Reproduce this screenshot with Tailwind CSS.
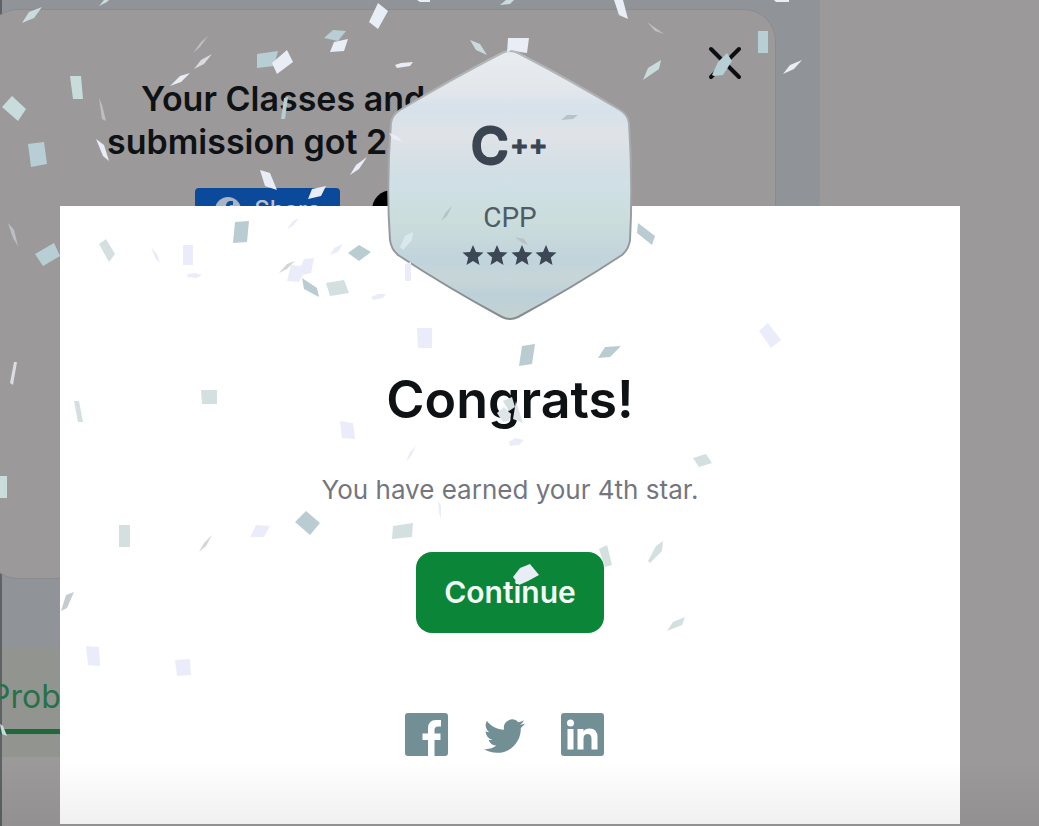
<!DOCTYPE html>
<html lang="en">
<head>
<meta charset="utf-8">
<meta name="viewport" content="width=device-width, initial-scale=1">
<title>Congrats!</title>
<script src="https://cdn.jsdelivr.net/npm/@tailwindcss/browser@4"></script>
</head>
<body class="relative min-h-screen overflow-hidden bg-[#9c999b] font-['Inter',sans-serif] text-[#0f1214]">

<!-- Dimmed page behind the dialog -->
<main class="min-h-screen border-l-2 border-[#5e6265]">
  <div class="mr-[219px] bg-[#909398] pt-[9px] pb-[68px]">
    <section class="-ml-4 mr-[44px] flex h-[570px] flex-col rounded-[32px] border border-[#8a8b8f] bg-[#9c999b] pt-[67px]">
      <div class="flex flex-col">
        <h2 class="text-[34px] leading-[43px] font-semibold whitespace-nowrap">
          <span class="block pl-[154px]">Your Classes and</span>
          <span class="block pl-[120px]">submission got 2</span>
        </h2>
        <div class="flex items-center gap-8 pt-[25px] pl-[208px]">
          <button class="flex h-11 w-[145px] items-center justify-center gap-3 rounded bg-[#0b4a9b] text-2xl font-medium text-[#b9c3d0]">
            <svg class="size-7" viewBox="0 0 28 28" aria-hidden="true"><circle cx="14" cy="14" r="13" fill="#a9b4c4"/><path d="M12 27V17H9v-4h3v-3c0-3 2-5 5-5h2v4h-2c-1 0-1.500.5-1.500 1.500V13H19l-.6 4h-2.900v10z" fill="#0b4a9b"/></svg>
            Share
          </button>
          <button class="size-10 rounded-full bg-black" aria-label="Share on X"></button>
        </div>
      </div>
    </section>
  </div>
  <nav class="mr-[219px] h-[110px] bg-[#929490] pt-[26px]">
    <a href="#problems" class="-ml-3 block w-48 border-b-[5px] border-[#21693d] pb-2 text-[32px] leading-[48px] text-[#28704a]">Problems</a>
  </nav>
</main>
<button class="absolute top-[45px] left-[707px] size-9" aria-label="Close">
  <svg class="size-9" viewBox="0 0 36 36" fill="none" stroke="#0c0e10" stroke-width="4" stroke-linecap="round"><path d="M4 4 32 32M32 4 4 32"/></svg>
</button>

<!-- Dialog -->
<div class="absolute inset-0 flex pt-[206px] pr-[79px] pb-[2px] pl-[60px]">
  <div role="dialog" aria-labelledby="title" class="flex flex-1 flex-col items-center bg-white">
    <svg class="-mt-[158px] h-[274px] w-[248px] shrink-0" viewBox="386 48 248 274" role="img" aria-label="C++ badge, four stars">
      <defs>
        <linearGradient id="silver" x1="0" y1="0" x2="0" y2="1">
          <stop offset="0" stop-color="#e8edf0"/><stop offset=".14" stop-color="#e3e7ec"/><stop offset=".22" stop-color="#d6e1eb"/>
          <stop offset=".32" stop-color="#dfe3e7"/><stop offset=".44" stop-color="#d2dfe5"/><stop offset=".52" stop-color="#cfe0e5"/><stop offset=".64" stop-color="#cbdcdb"/>
          <stop offset=".78" stop-color="#c1d4dc"/><stop offset=".85" stop-color="#c7d6d8"/><stop offset=".91" stop-color="#bdd0da"/><stop offset="1" stop-color="#c4d3d0"/>
        </linearGradient>
        <linearGradient id="rim" x1="0" y1="0" x2="0" y2="1">
          <stop offset="0" stop-color="#b4b8bb"/><stop offset=".4" stop-color="#a5a8aa"/><stop offset="1" stop-color="#858b8e"/>
        </linearGradient>
      </defs>
      <path d="M502 53Q510 49 518 53Q572 81 620 110Q628 115 629 123Q633 184 630 240Q629 249 622 255Q572 288 518 317Q510 321 502 317Q448 288 398 255Q391 249 390 240Q386 184 391 123Q392 115 400 110Q448 81 502 53Z" fill="url(#silver)" stroke="url(#rim)" stroke-width="2"/>
      <g fill="#3b4552" stroke="#3b4552" stroke-linejoin="round" font-family="Inter, sans-serif">
        <text x="471" y="164" font-size="51" font-weight="500" stroke-width="3">C</text>
        <text x="510" y="155" font-size="28" font-weight="600" stroke-width="1">++</text>
      </g>
      <text x="510" y="227" text-anchor="middle" font-family="Roboto, sans-serif" font-size="28" fill="#4f5c65">CPP</text>
      <g fill="#3b4754">
        <path id="star" d="M473 245l3 7 7.500.6-5.700 5 1.700 7.300-6.500-3.900-6.500 3.900 1.700-7.300-5.700-5 7.500-.6z"/>
        <use href="#star" x="24"/><use href="#star" x="49"/><use href="#star" x="73"/>
      </g>
    </svg>
    <h1 id="title" class="mt-11 text-[52px] leading-[68px] font-semibold">Congrats!</h1>
    <p class="mt-[38px] text-[26px] leading-9 text-[#74767f]">You have earned your 4th star.</p>
    <button class="mt-11 h-[81px] w-[188px] shrink-0 rounded-2xl bg-[#0b8538] text-[30px] font-semibold text-[#f3fbf6]">Continue</button>
    <div class="mt-20 flex items-center gap-9 pr-3 text-[#738f96]">
      <a href="#facebook" aria-label="Facebook"><svg class="size-[43px]" viewBox="0 0 43 43" fill="currentColor"><path d="M3 0H40Q43 0 43 3V40Q43 43 40 43H29.500V27H35.500V20.500H29.500V17Q29.500 13.500 33 13.500H36V7H31Q23 7 23 15.500V20.500H17.500V27H23V43H3Q0 43 0 40V3Q0 0 3 0Z"/></svg></a>
      <a href="#twitter" aria-label="Twitter"><svg class="h-[43px] w-[41px]" viewBox="0 -1 24 24" fill="currentColor"><path d="M23.953 4.570a10 10 0 01-2.825.775 4.958 4.958 0 002.163-2.723c-.951.555-2.005.959-3.127 1.184a4.920 4.920 0 00-8.384 4.482C7.690 8.095 4.067 6.130 1.640 3.162a4.822 4.822 0 00-.666 2.475c0 1.710.870 3.213 2.188 4.096a4.904 4.904 0 01-2.228-.616v.060a4.923 4.923 0 003.946 4.827 4.996 4.996 0 01-2.212.085 4.936 4.936 0 004.604 3.417 9.867 9.867 0 01-6.102 2.105c-.390 0-.779-.023-1.170-.067a13.995 13.995 0 007.557 2.209c9.053 0 13.998-7.496 13.998-13.985 0-.210 0-.420-.015-.630A9.935 9.935 0 0024 4.590z"/></svg></a>
      <a href="#linkedin" aria-label="LinkedIn"><svg class="size-[43px]" viewBox="0 0 43 43" fill="currentColor"><path fill-rule="evenodd" d="M3 0H40Q43 0 43 3V40Q43 43 40 43H3Q0 43 0 40V3Q0 0 3 0ZM6.500 16V36.500H12.500V16ZM9.500 6.500A3.500 3.500 0 1 0 9.500 13.500A3.500 3.500 0 1 0 9.500 6.500ZM16.500 16V36.500H22.500V26Q22.500 21 26.500 21Q30.500 21 30.500 26V36.500H36.500V24.500Q36.500 15.500 28.500 15.500Q24 15.500 22.500 18.500V16Z"/></svg></a>
    </div>
  </div>
</div>

<!-- Shade along the bottom edge -->
<div class="pointer-events-none absolute inset-x-0 bottom-0 h-[66px] bg-linear-to-b from-black/0 to-black/6"></div>

<!-- Confetti -->
<svg class="pointer-events-none absolute top-0 left-0 h-[826px] w-[1039px]" viewBox="0 0 1039 826" aria-hidden="true">
  <g fill="#c9dcdc">
    <path d="M22 23 29 12 42 7 34 18ZM99 6 104 0H109L107 2ZM500 5 506 0H514L510 4Z"/>
    <path d="M70 76H81L83 99H73ZM2 107 12 96 26 109 18 121Z"/>
    <path d="M470 40 480 44 487 55 476 50ZM643 80 648 68 661 60 659 69Z"/>
    <path d="M0 476H7V498H0ZM0 724 3 726 7 736 2 734Z"/>
  </g>
  <g fill="#b7cfd4">
    <path d="M28 144 44 142 47 164 31 167ZM35 254 54 243 60 256 43 266Z"/>
    <path d="M257 54 278 51 274 66 257 68ZM324 38 333 30 346 31 338 41Z"/>
    <path d="M758 31H768V53H758ZM712 75 718 62 727 53 732 61 723 75 714 76Z"/>
    <path d="M284 98 288 97 285 119 281 119Z"/>
  </g>
  <g fill="#e9edf5">
    <path d="M369 22 378 3 388 11 378 29ZM272 63 287 50 293 62 277 74ZM330 52 334 42 348 39 344 51Z"/>
    <path d="M260 170 270 173 277 190 265 186ZM308 199 312 189 326 186 321 196Z"/>
    <path d="M614 0H623L628 19 619 15ZM508 38H529L527 53 520 52 511 50 507 53Z"/>
    <path d="M170 86 180 76 190 73 181 82ZM96 139 104 145 109 161 103 156ZM350 175 356 165 367 157 359 169Z"/>
    <path d="M783 74 790 65 802 60 794 69ZM774 0H789V2H776ZM395 65 401 63 413 62 410 66 397 68ZM389 133 397 136 403 142 393 139ZM417 0H430V2H420Z"/>
    <path d="M513 577 520 568 530 564 539 575 528 581 519 585Z"/>
  </g>
  <g fill="#bdbfc3">
    <path d="M193 53 201 42 208 36 200 47Z"/>
    <path d="M194 69 201 60 212 54 204 64Z" fill="#d9dbde"/>
    <path d="M99 98 102 105 106 121 102 119ZM8 223 14 230 18 246 13 238ZM647 22 657 29 664 34 655 31Z"/>
    <path d="M10 383 14 362H17L13 385Z" fill="#dcdde0"/>
  </g>
  <g fill="#b9ccd1">
    <path d="M235 222 249 221 247 242 233 243ZM348 253 359 245 371 252 359 261ZM302 278 317 288 319 297 304 289Z"/>
    <path d="M522 346 535 344 532 364 519 366ZM598 358 605 347 621 346 610 357ZM295 522 306 511 320 523 310 535Z"/>
    <path d="M638 223 655 236 652 245 637 233Z"/>
    <path d="M61 611 66 595 74 592 67 608Z" fill="#c6cbcf"/>
    <path d="M199 552 204 543 212 535 206 546ZM279 273 287 264 295 261 287 269Z" fill="#d3d5d9"/>
  </g>
  <g fill="#d3e0df">
    <path d="M99 244 106 239 115 254 109 262ZM326 283 344 280 349 293 330 296ZM201 390H217V404H202Z"/>
    <path d="M74 401H79L83 422H78ZM693 458 706 454 712 463 699 467ZM119 525H130V547H119Z"/>
    <path d="M393 526 413 523 412 537 392 539ZM648 561 656 546 663 541 662 551 650 563ZM667 631 673 622 685 617 682 625Z"/>
    <path d="M599 549 607 545 612 565 605 567ZM503 401 512 397 515 407 509 411Z"/>
  </g>
  <g fill="#ebecf9">
    <path d="M183 245H193V265H183ZM188 274 195 273 202 275 197 278 187 277ZM287 281 291 265 301 266 304 259 314 258 311 273 303 275 299 282Z"/>
    <path d="M330 255 334 248 343 244 338 252ZM371 297 378 294 386 294 383 298 373 300ZM287 229 293 221 299 218 293 226ZM151 247 157 254 160 263 155 258Z"/>
    <path d="M417 328H432V348H418ZM759 331 768 323 781 340 771 348ZM340 421 353 423 355 439 342 438Z"/>
    <path d="M509 442 515 438 524 440 519 445 510 446ZM250 537 256 525 270 526 264 537Z"/>
    <path d="M86 646 99 647 100 666 88 665ZM175 660 190 659 191 675 177 676ZM405 264 411 262V281H405Z"/>
    <path d="M406 462 410 452 416 446 411 456ZM438 500 441 506V519L439 513Z"/>
    <path d="M497 413 504 407 511 414 509 421 503 422ZM516 401 523 423 513 419Z" fill="#dde5eb"/>
  </g>
  <g fill="#b5c2c8">
    <path d="M561 120 567 115 578 115 573 119ZM441 221 446 212 452 206 447 216Z"/>
    <path d="M400 247 405 236 413 232 412 240 403 250Z" fill="#dae8ed"/>
    <path d="M515 237 524 239 528 245 521 242Z"/>
  </g>
</svg>
</body>
</html>
